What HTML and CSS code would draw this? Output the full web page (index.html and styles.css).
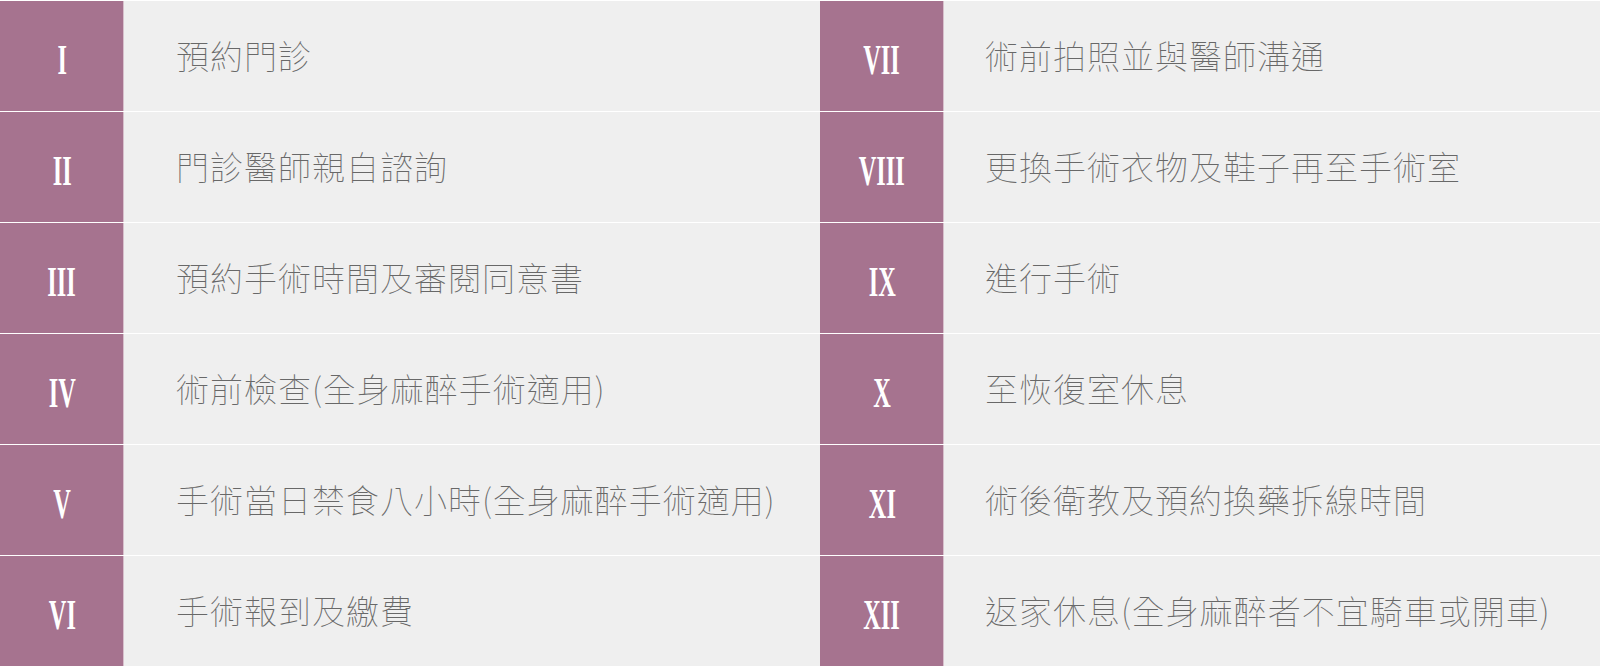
FILE: index.html
```html
<!DOCTYPE html>
<html lang="zh-Hant">
<head>
<meta charset="utf-8">
<title>手術流程</title>
<link rel="stylesheet" href="styles.css">
</head>
<body>
<div class="steps">
  <div class="num"><span>I</span></div><div class="txt txt-l">預約門診</div>
  <div class="num"><span>VII</span></div><div class="txt txt-r">術前拍照並與醫師溝通</div>
  <div class="num"><span>II</span></div><div class="txt txt-l">門診醫師親自諮詢</div>
  <div class="num"><span>VIII</span></div><div class="txt txt-r">更換手術衣物及鞋子再至手術室</div>
  <div class="num"><span>III</span></div><div class="txt txt-l">預約手術時間及審閱同意書</div>
  <div class="num"><span>IX</span></div><div class="txt txt-r">進行手術</div>
  <div class="num"><span>IV</span></div><div class="txt txt-l">術前檢查(全身麻醉手術適用)</div>
  <div class="num"><span>X</span></div><div class="txt txt-r">至恢復室休息</div>
  <div class="num"><span>V</span></div><div class="txt txt-l">手術當日禁食八小時(全身麻醉手術適用)</div>
  <div class="num"><span>XI</span></div><div class="txt txt-r">術後衛教及預約換藥拆線時間</div>
  <div class="num"><span>VI</span></div><div class="txt txt-l">手術報到及繳費</div>
  <div class="num"><span>XII</span></div><div class="txt txt-r">返家休息(全身麻醉者不宜騎車或開車)</div>
</div>
</body>
</html>
```
FILE: styles.css
```css
html, body {
  margin: 0;
  padding: 0;
  background: #ffffff;
  overflow: hidden;
}
.steps {
  display: grid;
  grid-template-columns: 124px 696px 124px 656px;
  grid-auto-rows: 110px;
  row-gap: 1px;
  padding: 1px 0;
  background: #ffffff;
  width: 1600px;
}
.num {
  background: #a6738f;
  box-shadow: inset -1px 0 0 rgba(255, 255, 255, 0.55);
  display: flex;
  align-items: center;
  justify-content: center;
  padding-top: 8px;
  box-sizing: border-box;
}
.num span {
  display: inline-block;
  color: #ffffff;
  font-family: "Liberation Serif", serif;
  font-weight: 700;
  font-size: 42px;
  line-height: 1;
  transform: scaleX(0.58);
}
.txt {
  background: #efefef;
  display: flex;
  align-items: center;
  color: #686868;
  font-family: "Noto Sans CJK TC", "Noto Sans CJK SC", sans-serif;
  font-weight: 100;
  font-size: 33px;
  letter-spacing: 1px;
  line-height: 1;
  padding-bottom: 2px;
  box-sizing: border-box;
  white-space: nowrap;
}
.txt-l {
  padding-left: 52px;
}
.txt-r {
  padding-left: 41px;
}
```
